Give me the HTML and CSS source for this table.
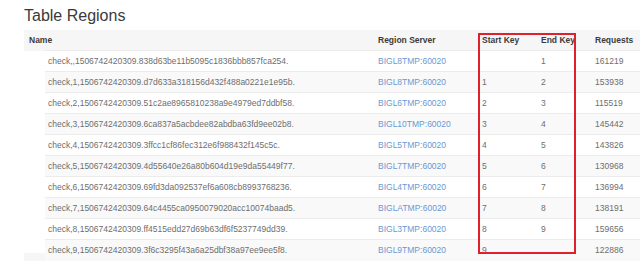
FILE: index.html
```html
<!DOCTYPE html>
<html lang="en">

<head>
    <meta charset="UTF-8">
    <title>Table Regions</title>
    <link rel="stylesheet" href="styles.css">
</head>

<body>

    <h2 class="title">Table Regions</h2>

    <!-- Regions table -->
    <div class="regions">
        <table>
            <colgroup>
                <col class="c-indent">
                <col class="c-name">
                <col class="c-server">
                <col class="c-start">
                <col class="c-end">
                <col class="c-req">
            </colgroup>
            <thead>
                <tr>
                    <th colspan="2">Name</th>
                    <th>Region Server</th>
                    <th>Start Key</th>
                    <th>End Key</th>
                    <th>Requests</th>
                </tr>
            </thead>
            <tbody>
                <tr><td class="indent"></td><td class="name">check,,1506742420309.838d63be11b5095c1836bbb857fca254.</td><td><a href="#">BIGL8TMP:60020</a></td><td></td><td>1</td><td>161219</td></tr>
                <tr><td class="indent"></td><td class="name">check,1,1506742420309.d7d633a318156d432f488a0221e1e95b.</td><td><a href="#">BIGL8TMP:60020</a></td><td>1</td><td>2</td><td>153938</td></tr>
                <tr><td class="indent"></td><td class="name">check,2,1506742420309.51c2ae8965810238a9e4979ed7ddbf58.</td><td><a href="#">BIGL6TMP:60020</a></td><td>2</td><td>3</td><td>115519</td></tr>
                <tr><td class="indent"></td><td class="name">check,3,1506742420309.6ca837a5acbdee82abdba63fd9ee02b8.</td><td><a href="#">BIGL10TMP:60020</a></td><td>3</td><td>4</td><td>145442</td></tr>
                <tr><td class="indent"></td><td class="name">check,4,1506742420309.3ffcc1cf86fec312e6f988432f145c5c.</td><td><a href="#">BIGL5TMP:60020</a></td><td>4</td><td>5</td><td>143826</td></tr>
                <tr><td class="indent"></td><td class="name">check,5,1506742420309.4d55640e26a80b604d19e9da55449f77.</td><td><a href="#">BIGL7TMP:60020</a></td><td>5</td><td>6</td><td>130968</td></tr>
                <tr><td class="indent"></td><td class="name">check,6,1506742420309.69fd3da092537ef6a608cb8993768236.</td><td><a href="#">BIGL4TMP:60020</a></td><td>6</td><td>7</td><td>136994</td></tr>
                <tr><td class="indent"></td><td class="name">check,7,1506742420309.64c4455ca0950079020acc10074baad5.</td><td><a href="#">BIGLATMP:60020</a></td><td>7</td><td>8</td><td>138191</td></tr>
                <tr><td class="indent"></td><td class="name">check,8,1506742420309.ff4515edd27d69b63df6f5237749dd39.</td><td><a href="#">BIGL3TMP:60020</a></td><td>8</td><td>9</td><td>159656</td></tr>
                <tr><td class="indent last"></td><td class="name">check,9,1506742420309.3f6c3295f43a6a25dbf38a97ee9ee5f8.</td><td><a href="#">BIGL9TMP:60020</a></td><td>9</td><td></td><td>122886</td></tr>
            </tbody>
        </table>

        <!-- Highlight around the key columns -->
        <div class="highlight"></div>
    </div>

</body>

</html>
```

FILE: styles.css
```css
/* Global Styles */
body {
    font-family: "Liberation Sans", Arial, sans-serif;
    background-color: #fff;
    color: #6e6e6e;
    margin: 0;
    overflow: hidden;
}

/* Page Header */
.title {
    margin: 0;
    padding: 6px 0 0 24px;
    font-size: 16px;
    font-weight: normal;
    line-height: 20px;
    color: #3a3a3a;
}

/* Regions Table */
.regions {
    position: relative;
    margin: 4px 0 0 24px;
}

table {
    border-collapse: collapse;
    table-layout: fixed;
    width: 616px;
    font-size: 8.5px;
}

.c-indent { width: 21px; }
.c-name { width: 328px; }
.c-server { width: 104px; }
.c-start { width: 59px; }
.c-end { width: 54px; }
.c-req { width: 50px; }

th {
    background-color: #f6f6f6;
    color: #3c3c3c;
    font-weight: bold;
    text-align: left;
    height: 20px;
    padding: 0 0 0 5px;
    white-space: nowrap;
}

td {
    height: 21px;
    padding: 0 0 0 5px;
    border-top: 1px solid #ececec;
    white-space: nowrap;
    box-sizing: border-box;
}

td.name {
    padding-left: 3px;
}

td.indent {
    border-top: none;
    background-color: #fff;
    padding: 0;
}

tbody tr:nth-child(even) td {
    background-color: #f9f9f9;
}

tbody tr:nth-child(even) td.indent {
    background-color: #fff;
}

tbody tr td.indent.last {
    background: linear-gradient(#fff 13px, #f6f6f6 13px);
}

a {
    color: #6a98d2;
    text-decoration: none;
}

/* Red annotation box */
.highlight {
    position: absolute;
    left: 454px;
    top: 3px;
    width: 98px;
    height: 221px;
    border: 2px solid #e0202c;
    box-sizing: border-box;
}
```
